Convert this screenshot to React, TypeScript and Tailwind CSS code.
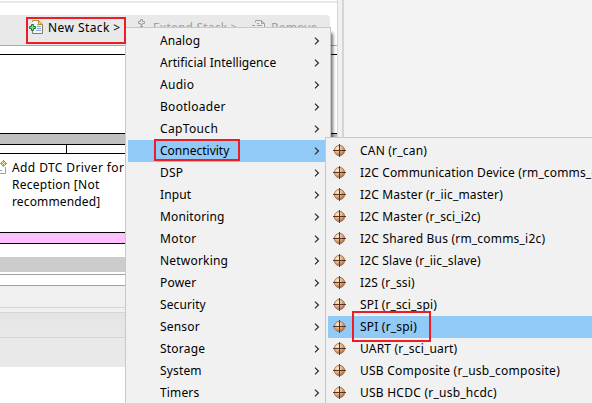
import React from "react";

const font = "font-['Noto_Sans','Noto_Sans_CJK_SC',sans-serif] text-[12px] whitespace-nowrap text-black";

const menu: [string, string][] = [
  ["Analog", "tracking-[0.1px]"],
  ["Artificial Intelligence", "tracking-[0.05px]"],
  ["Audio", "tracking-[0.3px]"],
  ["Bootloader", "tracking-[0.3px]"],
  ["CapTouch", "tracking-[0.35px]"],
  ["Connectivity", "tracking-[0px]"],
  ["DSP", "tracking-[0.2px]"],
  ["Input", "tracking-[0.1px]"],
  ["Monitoring", "tracking-[0.15px]"],
  ["Motor", "tracking-[0.4px]"],
  ["Networking", "tracking-[0.2px]"],
  ["Power", "tracking-[0.2px]"],
  ["Security", "tracking-[0.1px]"],
  ["Sensor", "tracking-[0.2px]"],
  ["Storage", "tracking-[0.2px]"],
  ["System", "tracking-[0.15px]"],
  ["Timers", "tracking-[0.15px]"],
];

const modules: [string, string][] = [
  ["CAN (r_can)", "tracking-[0.2px]"],
  ["I2C Communication Device (rm_comms_i2c)", "tracking-[0.14px]"],
  ["I2C Master (r_iic_master)", "tracking-[0.17px]"],
  ["I2C Master (r_sci_i2c)", "tracking-[0.15px]"],
  ["I2C Shared Bus (rm_comms_i2c)", "tracking-[0.2px]"],
  ["I2C Slave (r_iic_slave)", "tracking-[0.15px]"],
  ["I2S (r_ssi)", "tracking-[0.2px]"],
  ["SPI (r_sci_spi)", "tracking-[0.15px]"],
  ["SPI (r_spi)", "tracking-[0.2px]"],
  ["UART (r_sci_uart)", "tracking-[0.17px]"],
  ["USB Composite (r_usb_composite)", "tracking-[0.25px]"],
  ["USB HCDC (r_usb_hcdc)", "tracking-[0.24px]"],
];

function NewStackIcon() {
  return (
    <svg width="16" height="16" viewBox="0 0 16 16" className="shrink-0">
      <path d="M4.500 1.500h6l4 4v9h-10z" fill="#f1f6fd" />
      <path d="M4.500 3V1.500h6" fill="none" stroke="#b8923c" />
      <path d="M4.500 12v2.500h10v-9" fill="none" stroke="#857b5d" />
      <path d="M10.500 1.500v4h4z" fill="#eed58e" stroke="#b38b30" />
      <path d="M9 5.500h1M9 7.500h4M9 9.500h4M8 11.500h5" stroke="#8ba8d4" />
      <path d="M3.500 5.500h2v2h2v2h-2v2h-2v-2h-2v-2h2z" fill="#8fdc86" stroke="#217345" />
    </svg>
  );
}

function ModuleIcon() {
  return (
    <svg width="13" height="13" viewBox="0 0 13 13" className="shrink-0">
      <defs>
        <radialGradient id="ball" cx=".35" cy=".3" r=".75">
          <stop offset="0" stopColor="#fff0cc" />
          <stop offset=".45" stopColor="#e3bb90" />
          <stop offset="1" stopColor="#a5674a" />
        </radialGradient>
      </defs>
      <circle cx="6.500" cy="6.500" r="5.200" fill="url(#ball)" stroke="#a87556" strokeWidth=".9" />
      <path d="M6.500 0v13M0 6.500h13" stroke="#5d3024" />
    </svg>
  );
}

function Chevron() {
  return (
    <svg width="6" height="8" viewBox="0 0 6 8" className="shrink-0">
      <path d="M1 .6 4.400 4 1 7.400" fill="none" stroke="#333" strokeWidth="1.300" />
    </svg>
  );
}

function Workspace() {
  return (
    <div className="flex h-[403px] w-[592px] bg-white">
      <div className="flex w-[337px] flex-col">
        <div className="mt-px h-[2px] bg-[#e9e9e9]" />
        <div className="mt-3 flex h-[30px] w-[330px] items-start rounded-tr bg-[#e9e9e9] pl-[28px]">
          <div className="mt-1 flex h-[17px] w-[98px] shrink-0 items-start">
            <NewStackIcon />
            <span className="ml-1 leading-[18px] tracking-[0.42px]">New Stack &gt;</span>
          </div>
          <div className="mt-1 ml-[11px] flex h-[17px] w-[114px] shrink-0 items-start text-[#a0a0a0]">
            <svg width="10" height="14" viewBox="0 0 10 14">
              <path d="M3.500 2.500V.5h2v2h2v2h-2v1h-2v-1h-2v-2zM3 7.500h3M4.500 5v3" fill="none" stroke="#a0a0a0" />
            </svg>
            <span className="ml-[6px] leading-[18px] tracking-[0.2px]">Extend Stack &gt;</span>
          </div>
          <div className="mt-1 flex h-[17px] shrink-0 items-start text-[#a0a0a0]">
            <svg width="15" height="15" viewBox="0 0 15 15">
              <path d="M4.500 3.500v-2h6l3 3V14M10.500 1.500v3h3M1 6.500h3M6 6.500h5M6 4.500h2" fill="none" stroke="#a0a0a0" />
            </svg>
            <span className="ml-[5px] leading-[18px] tracking-[0.2px]">Remove</span>
          </div>
        </div>
        <div className="h-px bg-[#a8a8a8]" />
        <div className="mt-2 h-px bg-black" />
        <div className="mt-[78px] h-3 border-y border-black bg-[#c0c0c0]" />
        <div className="h-2 w-[67px] border-r border-black" />
        <div className="h-px bg-black" />
        <div className="flex h-[78px] pt-[5px]">
          <svg width="8" height="16" viewBox="0 0 8 16">
            <path d="M0 14.500h5.500V8M0 11.500h2" fill="none" stroke="#8b9fb9" />
            <path d="m3.500 1.500 3 3-3 3-3-3z" fill="#fff3b0" stroke="#bd942c" />
            <path d="M3.500 1v7M0 4.500h7" stroke="#c79a28" />
            <path d="M3 4.500h1" stroke="#fffbe0" />
          </svg>
          <div className="ml-1 leading-[17px]">
            <div className="tracking-[0.4px]">Add DTC Driver for</div>
            <div className="tracking-[0.25px]">Reception [Not</div>
            <div className="tracking-[0.15px]">recommended]</div>
          </div>
        </div>
        <div className="h-3 border-y border-black bg-[#ffc0ff]" />
        <div className="mt-[13px] h-[15px] bg-[#ccc]" />
        <div className="mt-[2px] h-3 border-y border-[#a0a0a5]" />
        <div className="h-[21px] bg-[#f0f0f0]" />
        <div className="h-[6px] border-y border-[#d5d5d5] bg-[#f0f0f0]" />
        <div className="h-6 bg-gradient-to-b from-[#e4e4e4] to-[#e8e8e8]" />
        <div className="h-[30px] border-t border-[#d5d5d5] bg-[#e9e9e9]" />
      </div>
      <div className="w-[7px] border-r-2 border-l border-[#d5d5d5] bg-[#f0f0f0]" />
      <div className="flex-1 bg-[#f3f3f3]" />
    </div>
  );
}

export default function App() {
  return (
    <main className={`relative h-[403px] w-[592px] overflow-hidden ${font}`}>
      <Workspace />
      <div className="absolute top-[27px] left-[125px] h-[386px] w-[206px] border border-[#c8c8c8] bg-[#f1f1f1] pt-[2px] pr-[2px] pl-[2px] shadow-[3px_5px_3px_-1px_rgba(0,0,0,0.55)]">
        {menu.map(([label, spacing]) => (
          <div key={label} className={`flex h-[22px] items-center justify-between pr-[8px] pl-[32px] ${label === "Connectivity" ? "bg-[#91c9f7]" : ""}`}>
            <span className={spacing}>{label}</span>
            <Chevron />
          </div>
        ))}
      </div>
      <div className="absolute top-[137px] left-[325px] h-[280px] w-[290px] border border-[#c8c8c8] bg-[#f1f1f1] pt-[2px] pl-[2px]">
        {modules.map(([label, spacing]) => (
          <div key={label} className={`flex h-[22px] items-start pt-1 pl-[5px] ${label === "SPI (r_spi)" ? "bg-[#91c9f7]" : ""}`}>
            <ModuleIcon />
            <span className={`-mt-1 ml-[14px] leading-[22px] ${spacing}`}>{label}</span>
          </div>
        ))}
      </div>
      <div className="absolute top-[17px] left-[26px] h-[27px] w-[100px] border-2 border-[#ee1c25]" />
      <div className="absolute top-[139px] left-[154px] h-[22px] w-[86px] border-2 border-[#ee1c25]" />
      <div className="absolute top-[311px] left-[352px] h-[31px] w-[79px] border-2 border-[#ee1c25]" />
    </main>
  );
}
